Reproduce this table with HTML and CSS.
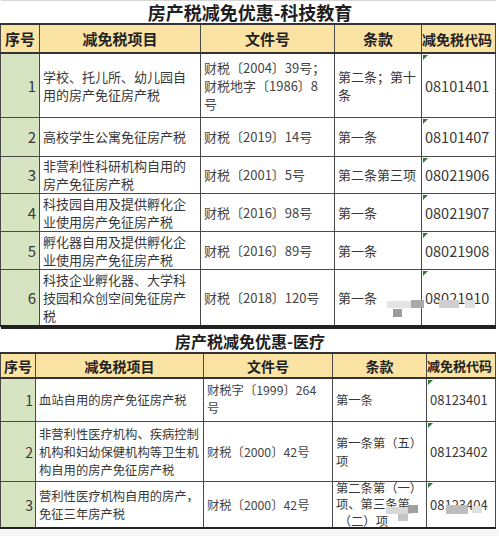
FILE: index.html
```html
<!DOCTYPE html>
<html lang="zh">
<head>
<meta charset="utf-8">
<link rel="stylesheet" href="styles.css">
</head>
<body>
<div class="page">
  <table class="t t1">
    <colgroup><col class="k1"><col class="k2"><col class="k3"><col class="k4"><col class="k5"></colgroup>
    <tr class="title a0"><td colspan="5">房产税减免优惠-科技教育</td></tr>
    <tr class="head a1"><th>序号</th><th>减免税项目</th><th>文件号</th><th>条款</th><th class="codeh">减免税代码</th></tr>
    <tr class="a2"><td class="seq">1</td><td class="item">学校、托儿所、幼儿园自<br>用的房产免征房产税</td><td class="file">财税〔2004〕39号；<br>财税地字〔1986〕8<br>号</td><td class="clause">第二条；第十<br>条</td><td class="code"><span class="tri"></span>08101401</td></tr>
    <tr class="a3"><td class="seq">2</td><td class="item">高校学生公寓免征房产税</td><td class="file">财税〔2019〕14号</td><td class="clause">第一条</td><td class="code"><span class="tri"></span>08101407</td></tr>
    <tr class="a4"><td class="seq">3</td><td class="item">非营利性科研机构自用的<br>房产免征房产税</td><td class="file">财税〔2001〕5号</td><td class="clause">第二条第三项</td><td class="code"><span class="tri"></span>08021906</td></tr>
    <tr class="a5"><td class="seq">4</td><td class="item">科技园自用及提供孵化企<br>业使用房产免征房产税</td><td class="file">财税〔2016〕98号</td><td class="clause">第一条</td><td class="code"><span class="tri"></span>08021907</td></tr>
    <tr class="a6"><td class="seq">5</td><td class="item">孵化器自用及提供孵化企<br>业使用房产免征房产税</td><td class="file">财税〔2016〕89号</td><td class="clause">第一条</td><td class="code"><span class="tri"></span>08021908</td></tr>
    <tr class="a7 last"><td class="seq">6</td><td class="item">科技企业孵化器、大学科<br>技园和众创空间免征房产<br>税</td><td class="file">财税〔2018〕120号</td><td class="clause">第一条</td><td class="code"><span class="tri"></span>08021910</td></tr>
  </table>

  <table class="t t2">
    <colgroup><col class="m1"><col class="m2"><col class="m3"><col class="m4"><col class="m5"></colgroup>
    <tr class="title b0"><td colspan="5">房产税减免优惠-医疗</td></tr>
    <tr class="head b1"><th>序号</th><th>减免税项目</th><th>文件号</th><th>条款</th><th class="codeh">减免税代码</th></tr>
    <tr class="b2"><td class="seq">1</td><td class="item">血站自用的房产免征房产税</td><td class="file top">财税字〔1999〕264<br>号</td><td class="clause">第一条</td><td class="code"><span class="tri"></span>08123401</td></tr>
    <tr class="b3"><td class="seq">2</td><td class="item">非营利性医疗机构、疾病控制<br>机构和妇幼保健机构等卫生机<br>构自用的房产免征房产税</td><td class="file">财税〔2000〕42号</td><td class="clause">第一条第（五）<br>项</td><td class="code"><span class="tri"></span>08123402</td></tr>
    <tr class="b4 last"><td class="seq">3</td><td class="item">营利性医疗机构自用的房产，<br>免征三年房产税</td><td class="file">财税〔2000〕42号</td><td class="clause ovf"><div class="clip"><div>第二条第（一）<br>项、第三条第<br>&nbsp;（二）项</div></div></td><td class="code"><span class="tri"></span>08123404</td></tr>
  </table>
  <div class="strip"></div>

  <div class="wm wm1">
    <span class="b" style="left:0;top:1px;width:28px;height:7px;background:#e4e4e4"></span>
    <span class="b" style="left:24px;top:0;width:13px;height:8px;background:#a9a9a9"></span>
    <span class="b" style="left:6px;top:9px;width:9px;height:8px;background:#9c9c9c"></span>
    <span class="b" style="left:52px;top:0;width:20px;height:8px;background:#cfcfcf"></span>
    <span class="b" style="left:78px;top:0;width:10px;height:8px;background:#dedede"></span>
  </div>
  <div class="wm wm2">
    <span class="b" style="left:0;top:2px;width:26px;height:7px;background:#d8d8d8"></span>
    <span class="b" style="left:22px;top:0;width:10px;height:8px;background:#a0a0a0"></span>
    <span class="b" style="left:12px;top:9px;width:10px;height:7px;background:#c4c4c4"></span>
    <span class="b" style="left:60px;top:0;width:22px;height:9px;background:#bdbdbd"></span>
    <span class="b" style="left:86px;top:1px;width:10px;height:7px;background:#e0e0e0"></span>
  </div>
</div>
</body>
</html>
```
FILE: styles.css
```css
html, body {
  margin: 0;
  padding: 0;
  background: #ffffff;
}
body {
  font-family: "Noto Sans CJK SC", "Noto Sans", sans-serif;
  color: #383838;
}
.page {
  position: relative;
  width: 499px;
  height: 536px;
  overflow: hidden;
}
.t {
  border-collapse: collapse;
  table-layout: fixed;
  width: 495px;
}
.t td, .t th {
  padding: 0 3px;
  border: 1px solid #4a4a4a;
  overflow: hidden;
  white-space: nowrap;
  line-height: 18px;
  vertical-align: middle;
}
.k1 { width: 39px; }
.k2 { width: 161px; }
.k3 { width: 134px; }
.k4 { width: 87px; }
.k5 { width: 74px; }
.m1 { width: 35px; }
.m2 { width: 168px; }
.m3 { width: 129px; }
.m4 { width: 94px; }
.m5 { width: 69px; }

.t .title td {
  border: none;
  border-top: 1px solid #d6d6d6;
  text-align: center;
  font-weight: 700;
  color: #1e1e1e;
  padding: 0 0 0 4px;
  line-height: 22px;
  overflow: visible;
}
.t1 .title td { font-size: 18px; }
.t2 .title td { font-size: 16px; border-top: 2px solid #222; }

.head th {
  background: #fbe3a4;
  font-weight: 700;
  color: #222;
  text-align: center;
  border-top: 2px solid #333;
  border-bottom: 2px solid #333;
}
.t1 .head th { font-size: 15px; }
.t2 .head th { font-size: 14px; }
.t1 .head th.codeh { padding: 0; font-size: 14px; text-align: left; }
.t2 .head th.codeh { padding: 0; font-size: 13px; text-align: left; }
.head th:first-child { padding: 0 2px; }

.seq {
  background: #d6e4c2;
  text-align: right;
  font-size: 15px;
}
.t2 .seq { font-size: 14px; padding-right: 2px; }
.item, .file, .clause { text-align: left; }
.t1 .item, .t1 .file, .t1 .clause { font-size: 13px; }
.t2 .item, .t2 .file, .t2 .clause { font-size: 12.3px; }
.file { color: #444; }
.t .top { vertical-align: top; padding-top: 2px; }
.t .ovf { overflow: visible; }
.clip {
  height: 45px;
  overflow: visible;
  display: flex;
  align-items: center;
  line-height: 16.5px;
}
.code {
  position: relative;
  font-size: 14.5px;
  padding-left: 2px;
}
.t2 .code { font-size: 13px; padding-left: 3px; }
.tri {
  position: absolute;
  left: 1px;
  top: 1px;
  width: 0;
  height: 0;
  border-top: 5px solid #2f7a36;
  border-right: 5px solid transparent;
}
.t .last td { border-bottom: 2px solid #222; }

.a0 td { height: 22px; }
.a1 th { height: 27px; }
.a2 td { height: 63px; }
.a3 td { height: 38px; }
.a4 td { height: 36px; }
.a5 td { height: 37px; }
.a6 td { height: 37px; }
.a7 td { height: 55px; }
.b0 td { height: 23px; }
.b1 th { height: 23px; }
.b2 td { height: 40px; }
.b3 td { height: 59px; }
.b4 td { height: 45px; }

.strip {
  height: 14px;
  background: #efefef;
  border-top: 1px solid #fafafa;
  box-shadow: inset 0 6px 0 #f7f7f7;
}
.wm {
  position: absolute;
  width: 100px;
  height: 20px;
  filter: blur(0.6px);
}
.wm1 { left: 387px; top: 300px; }
.wm2 { left: 386px; top: 505px; }
.b { position: absolute; display: block; }
```
